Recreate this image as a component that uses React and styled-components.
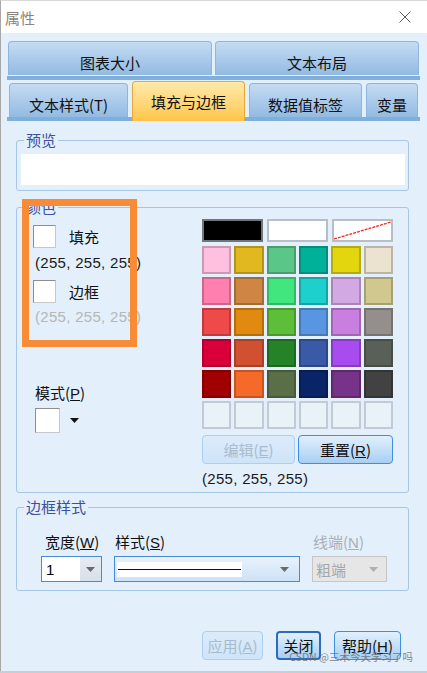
import styled, { createGlobalStyle } from "styled-components";

const GlobalStyle = createGlobalStyle`
  html, body { margin: 0; padding: 0; background: #e3effa; }
  body { font-family: "Noto Sans CJK SC", "Liberation Sans", sans-serif; }
`;

const palette = [
  ['#ffbfdf', '#e1b820', '#5ac788', '#00b19a', '#e3d60f', '#ebe3cf'],
  ['#ff80ae', '#cf8643', '#41e67e', '#1dcfcd', '#d2a9e2', '#d0c88f'],
  ['#ef4a4a', '#e08a10', '#5dbf38', '#5896e2', '#c97fe0', '#948f8d'],
  ['#d9003a', '#d05030', '#258226', '#3a59a6', '#a84bef', '#586058'],
  ['#a00000', '#f56a28', '#5a6e47', '#0a2468', '#773387', '#424242'],
  [null, null, null, null, null, null],
];

const Arrow = ({ color = '#666' }) => (
  <svg width="9" height="5" viewBox="0 0 9 5"><polygon points="0,0 9,0 4.5,5" fill={color} /></svg>
);

const App = () => {
  return (
    <Window>
      <GlobalStyle />
      <TitleBar>
        <Title>属性</Title>
        <svg width="12" height="12" viewBox="0 0 12 12">
          <path d="M0.5 0.5 L11.5 11.5 M11.5 0.5 L0.5 11.5" stroke="#5c5c5c" strokeWidth="1" />
        </svg>
      </TitleBar>

      <TabArea>
        <TabRow gap={3} pad={1} h={35}>
          <Tab w={204}>图表大小</Tab>
          <Tab w={204}>文本布局</Tab>
        </TabRow>
        <TabBar top={1} />
        <TabRow gap={4} pad={2} h={35} top={2}>
          <Tab w={119}>文本样式(T)</Tab>
          <Tab w={113} active>填充与边框</Tab>
          <Tab w={113}>数据值标签</Tab>
          <Tab w={52}>变量</Tab>
        </TabRow>
        <TabBar />
      </TabArea>

      <Content>
        <Group mt={11}>
          <Legend>预览</Legend>
          <GroupBody pad="6px 3px 5px 4px">
            <PreviewBox />
          </GroupBody>
        </Group>

        <Group mt={8}>
          <Legend>颜色</Legend>
          <ColorLayout>
            <LeftCol>
              <SwatchRow mt={10}>
                <Swatch />
                <span>填充</span>
              </SwatchRow>
              <Value mt={6} indent={2}>(255, 255, 255)</Value>
              <SwatchRow mt={8}>
                <Swatch />
                <span>边框</span>
              </SwatchRow>
              <Value mt={5} indent={2} muted>(255, 255, 255)</Value>
              <ModeLabel>模式(<U>P</U>)</ModeLabel>
              <ModeRow>
                <Swatch size={25} />
                <Arrow color="#111" />
              </ModeRow>
            </LeftCol>
            <RightCol>
              <WideRow>
                <Cell color="#000" edge="#70767e" />
                <Cell color="#fff" edge="#b8bec6" />
                <Cell color="#fff" edge="#b8bec6">
                  <svg width="100%" height="100%" viewBox="0 0 57 19" preserveAspectRatio="none">
                    <line x1="0" y1="18" x2="57" y2="1" stroke="#ff2424" strokeWidth="1.3" strokeDasharray="3 1" />
                  </svg>
                </Cell>
              </WideRow>
              <Grid>
                {palette.flat().map((c, i) => (
                  c ? <Cell key={i} color={c} /> : <Cell key={i} color="#e9f1f9" edge="#c2cad4" />
                ))}
              </Grid>
              <ButtonRow>
                <Button w={93} disabled>编辑(<U>E</U>)</Button>
                <Button w={95}>重置(<U>R</U>)</Button>
              </ButtonRow>
              <Value mt={6}>(255, 255, 255)</Value>
            </RightCol>
          </ColorLayout>
        </Group>

        <Group mt={6}>
          <Legend>边框样式</Legend>
          <GroupBody pad="0 8px 8px 24px">
            <StyleRow>
              <Field>
                <FieldLabel indent={4}>宽度(<U>W</U>)</FieldLabel>
                <Combo w={61} focus>
                  <ComboText white>1</ComboText>
                  <ComboButton><Arrow color="#6a6a6a" /></ComboButton>
                </Combo>
              </Field>
              <Field>
                <FieldLabel indent={1}>样式(<U>S</U>)</FieldLabel>
                <Combo w={186} focus gradient>
                  <LinePreview><LineSample /></LinePreview>
                  <ComboButton plain w={30}><Arrow color="#6a6a6a" /></ComboButton>
                </Combo>
              </Field>
              <Field>
                <FieldLabel indent={1} muted>线端(<U>N</U>)</FieldLabel>
                <Combo w={75} disabled>
                  <ComboText muted>粗端</ComboText>
                  <ComboButton plain w={26}><Arrow color="#b0b0b0" /></ComboButton>
                </Combo>
              </Field>
            </StyleRow>
          </GroupBody>
        </Group>
      </Content>

      <Footer>
        <Button w={61} disabled>应用(<U>A</U>)</Button>
        <Button w={45} strong>关闭</Button>
        <Button w={67}>帮助(<U>H</U>)</Button>
      </Footer>

      <Highlight />
      <Watermark>CSDN @三木今天学习了吗</Watermark>
    </Window>
  );
};

export default App;

const Window = styled.div`
  position: relative;
  width: 427px;
  height: 673px;
  box-sizing: border-box;
  background: #e3effa;
  border-bottom: 2px solid #c6ced8;
  box-shadow: inset 1px 0 0 #a8a8a8;
  display: flex;
  flex-direction: column;
  overflow: hidden;
`;

const TitleBar = styled.div`
  height: 33px;
  flex-shrink: 0;
  background: #fff;
  border-top: 1px solid #d8d8d8;
  border-left: 1px solid #a8a8a8;
  box-sizing: border-box;
  display: flex;
  align-items: center;
  justify-content: space-between;
  padding: 0 16px 0 4px;
`;

const Title = styled.div`
  font-size: 15px;
  color: #8a8580;
`;

const TabArea = styled.div`
  margin: 7px 7px 0;
`;

const TabRow = styled.div`
  display: flex;
  align-items: flex-end;
  gap: ${p => p.gap}px;
  padding-left: ${p => p.pad}px;
  height: ${p => p.h}px;
  margin-top: ${p => p.top || 0}px;
`;

const TabBar = styled.div`
  height: 4px;
  margin-top: ${p => p.top || 0}px;
  background: #80afdc;
`;

const Tab = styled.div`
  position: relative;
  z-index: ${p => (p.active ? 1 : 0)};
  box-sizing: border-box;
  width: ${p => p.w}px;
  height: ${p => (p.active ? 40 : 34)}px;
  margin-bottom: ${p => (p.active ? -4 : 0)}px;
  padding-top: ${p => (p.active ? 0 : 8)}px;
  border: 1px solid ${p => (p.active ? '#e4a83c' : '#8fb5dc')};
  border-bottom: none;
  border-radius: 4px 4px 0 0;
  background: ${p => (p.active
    ? 'linear-gradient(#ffeaa8, #ffd77a 55%, #ffc447)'
    : 'linear-gradient(#c4dcf2, #a9c9ea 55%, #92bbe2)')};
  display: flex;
  align-items: center;
  justify-content: center;
  font-size: 15px;
  color: #111;
  white-space: nowrap;
`;

const Content = styled.div`
  margin: 0 18px 0 16px;
`;

const Group = styled.fieldset`
  margin: ${p => p.mt}px 0 0;
  padding: 0;
  border: 1px solid #a6c6e8;
  border-radius: 3px;
  min-width: 0;
`;

const Legend = styled.legend`
  margin-left: 7px;
  padding: 0 2px;
  font-size: 15px;
  line-height: 16px;
  color: #3d4f9f;
`;

const GroupBody = styled.div`
  padding: ${p => p.pad};
`;

const PreviewBox = styled.div`
  height: 31px;
  background: #fff;
`;

const ColorLayout = styled.div`
  display: grid;
  grid-template-columns: 1fr 191px;
  padding: 0 15px 4px 16px;
`;

const LeftCol = styled.div`
  display: flex;
  flex-direction: column;
  font-size: 15px;
  min-width: 0;
`;

const SwatchRow = styled.div`
  display: flex;
  align-items: center;
  gap: 13px;
  margin-top: ${p => p.mt}px;
  height: 23px;
  color: #111;
`;

const Swatch = styled.div`
  box-sizing: border-box;
  width: ${p => p.size || 23}px;
  height: ${p => p.size || 23}px;
  background: #fff;
  border: 1px solid #c8c8c8;
  border-top-color: #8e8e8e;
  border-left-color: #8e8e8e;
`;

const Value = styled.div`
  margin-top: ${p => p.mt}px;
  padding-left: ${p => p.indent || 0}px;
  font-family: "Liberation Sans", sans-serif;
  font-size: 15px;
  letter-spacing: 0.3px;
  line-height: 18px;
  color: ${p => (p.muted ? '#b6b6b6' : '#1a1a1a')};
  white-space: nowrap;
`;

const ModeLabel = styled.div`
  margin: 58px 0 0 2px;
  line-height: 18px;
  color: #111;
`;

const ModeRow = styled.div`
  display: flex;
  align-items: center;
  gap: 10px;
  margin: 5px 0 0 2px;
`;

const U = styled.span`
  text-decoration: underline;
  font-family: "Liberation Sans", sans-serif;
`;

const RightCol = styled.div`
  display: flex;
  flex-direction: column;
  margin-top: 4px;
`;

const WideRow = styled.div`
  display: grid;
  grid-template-columns: repeat(3, 1fr);
  gap: 4px;
  height: 23px;
`;

const Grid = styled.div`
  display: grid;
  grid-template-columns: repeat(6, 1fr);
  grid-auto-rows: 28px;
  column-gap: 3px;
  row-gap: 3px;
  margin-top: 4px;
`;

const Cell = styled.div`
  box-sizing: border-box;
  background: ${p => p.color};
  border: 2px solid ${p => p.edge || 'rgba(0, 0, 0, 0.2)'};
  overflow: hidden;
  svg { display: block; }
`;

const ButtonRow = styled.div`
  display: flex;
  gap: 3px;
  margin-top: 6px;
`;

const Button = styled.button`
  box-sizing: border-box;
  width: ${p => p.w}px;
  height: 29px;
  padding: 0;
  border-radius: 4px;
  border: ${p => (p.strong ? '2px solid #2d6cbc' : '1px solid #3f8fe0')};
  background: linear-gradient(#e2effc, #c4e0f8 50%, #a8cff3);
  font-family: "Noto Sans CJK SC", sans-serif;
  font-size: 15px;
  color: #111;
  &:disabled {
    border-color: #a9d0f2;
    background: linear-gradient(#dcebfa, #cfe4f8);
    color: #a7bbcf;
  }
`;

const StyleRow = styled.div`
  display: flex;
  gap: 12px;
  margin-top: 18px;
`;

const Field = styled.div`
  display: flex;
  flex-direction: column;
  gap: 4px;
`;

const FieldLabel = styled.div`
  padding-left: ${p => p.indent}px;
  font-size: 15px;
  line-height: 18px;
  color: ${p => (p.muted ? '#a9b0b8' : '#111')};
`;

const Combo = styled.div`
  box-sizing: border-box;
  width: ${p => p.w}px;
  height: 26px;
  display: flex;
  border: 1px solid ${p => (p.disabled ? '#c6c6c6' : '#4a8ad2')};
  background: ${p => (p.disabled ? '#e6e6e6' : p.gradient ? 'linear-gradient(#e8f2fc, #cde2f7)' : '#fff')};
`;

const ComboText = styled.div`
  flex: 1;
  display: flex;
  align-items: center;
  padding-left: ${p => (p.muted ? 3 : 4)}px;
  font-family: ${p => (p.muted ? '"Noto Sans CJK SC"' : '"Liberation Sans"')}, sans-serif;
  font-size: 15px;
  color: ${p => (p.muted ? '#a6a6a6' : '#000')};
  background: ${p => (p.white ? '#fff' : 'transparent')};
`;

const ComboButton = styled.div`
  width: ${p => p.w || 21}px;
  display: flex;
  align-items: center;
  justify-content: center;
  background: ${p => (p.plain ? 'transparent' : 'linear-gradient(#e6ecf2, #d6e0ea)')};
`;

const LinePreview = styled.div`
  flex: 1;
  margin: 5px 27px 4px 2px;
  background: #fff;
  display: flex;
  align-items: center;
  padding: 0 1px;
`;

const LineSample = styled.div`
  flex: 1;
  height: 1px;
  background: #111;
`;

const Footer = styled.div`
  display: flex;
  justify-content: flex-end;
  align-items: center;
  gap: 13px;
  margin-top: 40px;
  padding-right: 26px;
`;

const Highlight = styled.div`
  position: absolute;
  left: 22px;
  top: 199px;
  width: 115px;
  height: 148px;
  box-sizing: border-box;
  border: 7px solid #f78b36;
  pointer-events: none;
`;

const Watermark = styled.div`
  position: absolute;
  right: 14px;
  bottom: 7px;
  font-size: 10.5px;
  color: rgba(110, 110, 110, 0.85);
  white-space: nowrap;
`;
